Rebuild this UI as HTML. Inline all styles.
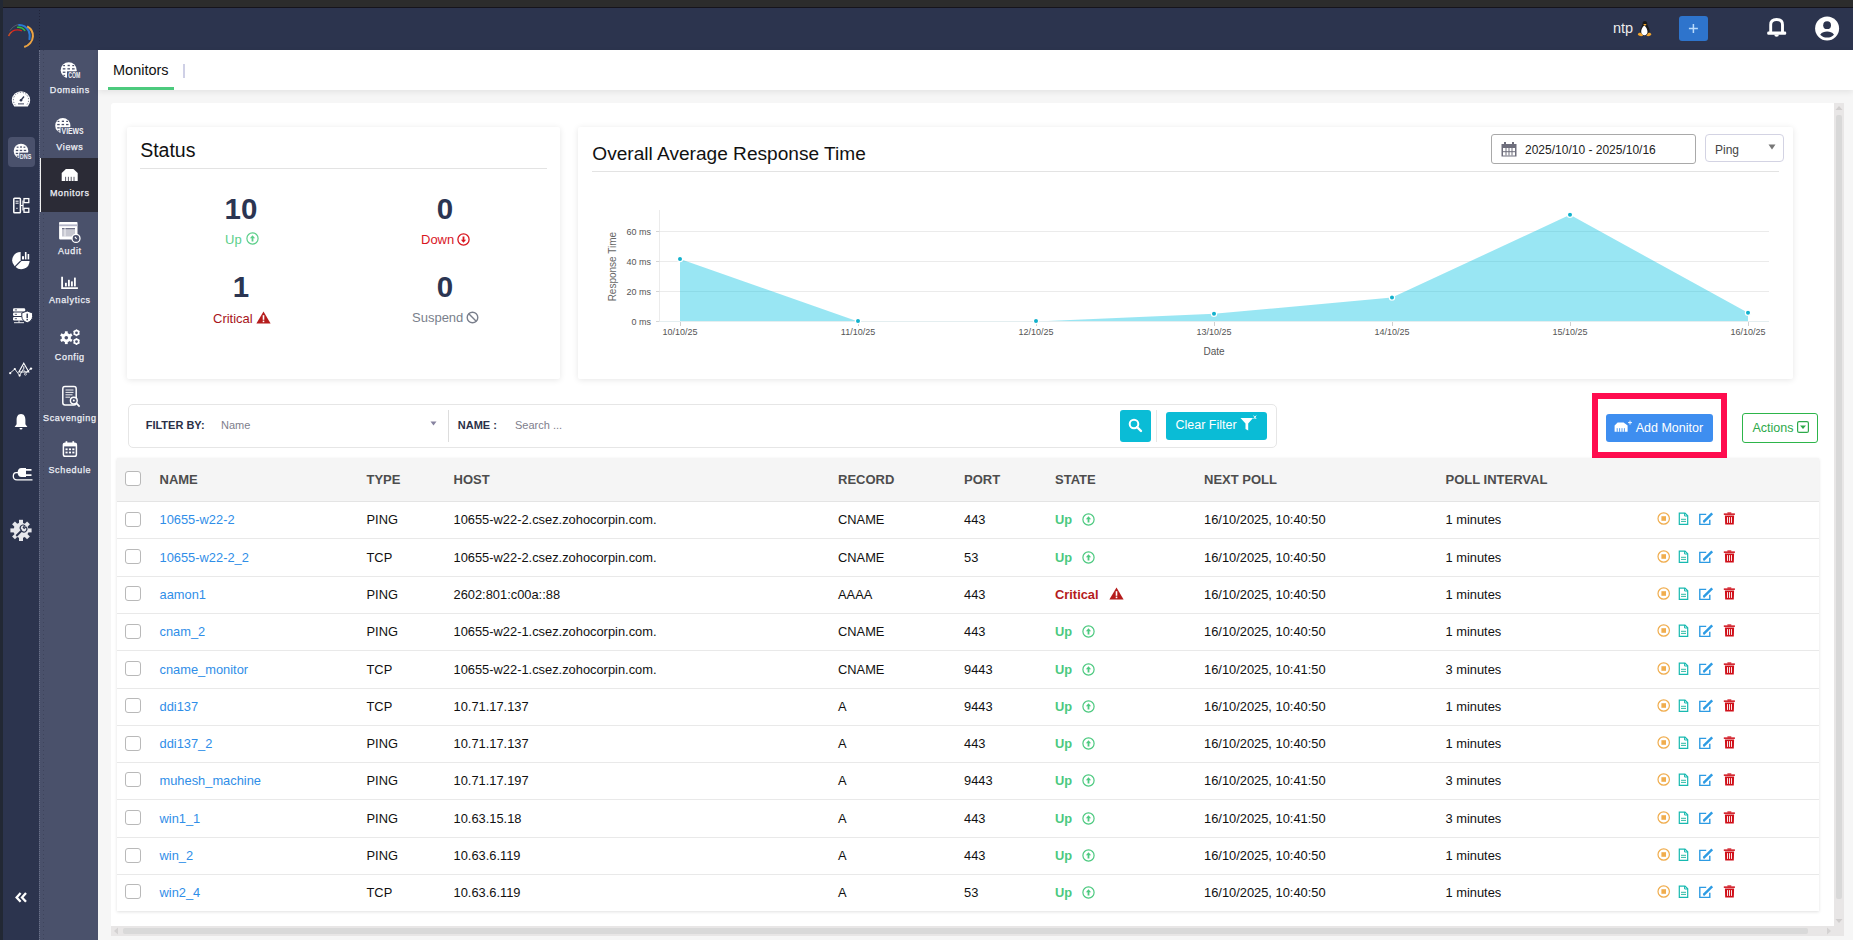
<!DOCTYPE html>
<html><head><meta charset="utf-8">
<style>
*{box-sizing:border-box;margin:0;padding:0}
html,body{width:1853px;height:940px;overflow:hidden;background:#f6f6f6;font-family:"Liberation Sans",sans-serif;color:#222}
.abs{position:absolute}
.t{position:absolute;line-height:1;white-space:nowrap}
.cb{position:absolute;width:16px;height:15px;border:1px solid #b9b9b9;border-radius:3px;background:#fff}
#topstrip{left:0;top:0;width:1853px;height:8px;background:#2c2c2c;border-bottom:1px solid #16141c}
#lstrip{left:0;top:0;width:3px;height:940px;background:#222834}
#col1{left:3px;top:8px;width:36px;height:932px;background:#2c344e}
#header{left:39px;top:8px;width:1814px;height:42px;background:#2c344e}
#col2{left:39px;top:50px;width:59px;height:890px;background:#4a516b;border-left:1px dotted #6a7189}
#col2dots{left:43px;top:50px;width:1px;height:890px;background:repeating-linear-gradient(to bottom,#3e445c 0,#3e445c 1px,transparent 1px,transparent 4px)}
#tabbar{left:98px;top:50px;width:1755px;height:40px;background:#fff;box-shadow:0 2px 6px rgba(0,0,0,.08)}
#panel{left:111px;top:103px;width:1723px;height:823px;background:#fff;border-radius:3px 0 0 0}
#vscroll{left:1834px;top:103px;width:10px;height:833px;background:#e8e6e6}
#hscroll{left:111px;top:926px;width:1723px;height:10px;background:#e8e6e6}
.card{position:absolute;background:#fff;border-radius:2px;box-shadow:0 1px 6px rgba(0,0,0,.10)}
.lbl{position:absolute;line-height:1;white-space:nowrap;font-size:9px;letter-spacing:0.65px;text-indent:0.65px;color:#eef0f6;text-align:center;width:59px;left:40px;-webkit-text-stroke:0.25px #eef0f6}
.ic{position:absolute}
</style></head><body>
<div id="topstrip" class="abs"></div>
<div id="lstrip" class="abs"></div>
<div id="col1" class="abs"></div>
<div id="header" class="abs"></div>
<div id="col2" class="abs"></div>
<div id="col2dots" class="abs"></div>
<div class="abs" style="left:39px;top:10px;width:1px;height:40px;background:repeating-linear-gradient(to bottom,#20243a 0,#20243a 1px,transparent 1px,transparent 3px)"></div>

<!-- logo -->
<svg class="ic" style="left:0;top:15px" width="40" height="40" viewBox="0 15 40 40">
 <path d="M10 30.5 C12 27.5 15 25.2 18.3 24.6" fill="none" stroke="#7d8294" stroke-width="0.8" opacity="0.6"/>
 <path d="M8.6 36 C10 33 12 31 15 30.2 C17.5 29.7 19.8 30 21.8 30.8" fill="none" stroke="#d9251e" stroke-width="1.3"/>
 <path d="M8.6 36 C9.5 34 10.5 32.6 11.6 31.8" fill="none" stroke="#b8552a" stroke-width="1.3"/>
 <path d="M17 27.4 C20 26.8 23 28 25.2 30.8" fill="none" stroke="#31c040" stroke-width="1.3"/>
 <path d="M18.3 25 C22.5 24.6 26.5 27.2 28.6 30.8 C29.8 33.2 29.9 37 29.4 40" fill="none" stroke="#2b79d2" stroke-width="2"/>
 <path d="M27.2 26.3 C31 28.5 33.2 32.5 32.9 36.5 C32.6 41.5 28.8 45.5 24.2 47" fill="none" stroke="#eda443" stroke-width="2.1"/>
</svg>
<!-- col1 icons -->
<svg class="ic" style="left:8px;top:86px" width="26" height="24" viewBox="8 86 26 24">
 <path d="M14.2 106.6 A9.2 9.2 0 1 1 27.8 106.6 Z" fill="#fff"/>
 <path d="M15.5 105.2 A7.6 7.6 0 1 1 26.5 105.2" fill="none" stroke="#2c344e" stroke-width="0.7" stroke-dasharray="1.2 1.5"/>
 <path d="M21.2 100 L24 96.5" stroke="#2c344e" stroke-width="1.3"/>
 <circle cx="21" cy="100.2" r="1.3" fill="#2c344e"/>
 <rect x="18" y="103.2" width="6" height="1.3" fill="#6a6f82"/>
</svg>
<div class="abs" style="left:8px;top:137px;width:27px;height:29.5px;background:#4a516c;border-radius:4px"></div>
<svg class="ic" style="left:10px;top:140px" width="24" height="22" viewBox="10 140 24 22">
 <circle cx="21" cy="151" r="7.3" fill="#fff"/>
 <g fill="#4a516c">
  <rect x="16.7" y="146.6" width="1.8" height="1.2"/><rect x="20.1" y="146.3" width="1.8" height="1.4"/><rect x="23.5" y="146.6" width="1.8" height="1.2"/>
  <rect x="15.8" y="149.8" width="2.4" height="1.3"/><rect x="19.8" y="149.8" width="2.4" height="1.3"/><rect x="23.8" y="149.8" width="2.4" height="1.3"/>
  <rect x="15.8" y="152.8" width="2.4" height="1.3"/>
  <rect x="16.8" y="155.6" width="1.8" height="1.2"/>
 </g>
 <rect x="19.3" y="152.6" width="13" height="7" fill="#4a516c"/>
 <text x="25.6" y="158.9" font-size="8" font-weight="bold" fill="#eef0f6" text-anchor="middle" font-family="Liberation Sans" textLength="11.5" lengthAdjust="spacingAndGlyphs">DNS</text>
</svg>
<svg class="ic" style="left:11px;top:195px" width="21" height="21" viewBox="11 195 21 21">
 <rect x="13.8" y="198.3" width="6.6" height="14.5" rx="0.8" fill="none" stroke="#fff" stroke-width="1.5"/>
 <path d="M15.6 201.2 H18.6 M15.6 203.2 H18.6 M16.3 208.3 H17.6" stroke="#fff" stroke-width="1"/>
 <path d="M20.4 205.5 H23 M23 200.6 V210.6" stroke="#fff" stroke-width="1.2"/>
 <rect x="24" y="198.6" width="4.8" height="4" fill="none" stroke="#fff" stroke-width="1.3"/>
 <rect x="24" y="208.3" width="4.8" height="4" fill="none" stroke="#fff" stroke-width="1.3"/>
</svg>
<svg class="ic" style="left:11px;top:250px" width="20" height="21" viewBox="11 250 20 21">
 <path d="M20.6 260.3 L20.6 252 A8.3 8.3 0 0 0 14.7 266.2 Z" fill="#fff"/>
 <path d="M21.5 261 L29.6 261 A8.3 8.3 0 0 1 15.6 266.9 Z" fill="#fff"/>
 <rect x="22" y="256.2" width="2" height="3.2" fill="#fff"/><rect x="24.9" y="252" width="1.6" height="7.4" fill="#fff"/><rect x="27.6" y="254" width="1.6" height="5.4" fill="#fff"/>
</svg>
<svg class="ic" style="left:11px;top:306px" width="23" height="19" viewBox="11 306 23 19">
 <rect x="13" y="308.2" width="12.2" height="3.4" rx="1.2" fill="#fff"/><rect x="13" y="312.6" width="12.2" height="3.4" rx="1.2" fill="#fff"/><rect x="13" y="317" width="12.2" height="3.4" rx="1.2" fill="#fff"/>
 <path d="M14.8 309.9 H17 M14.8 314.3 H17 M14.8 318.7 H17" stroke="#2c344e" stroke-width="0.8"/>
 <path d="M19 320.4 V322.5 M14 322.7 H24" stroke="#fff" stroke-width="0.9"/>
 <path d="M27.2 311 L32.6 313 V316.4 C32.6 319.5 30.3 321.6 27.2 322.8 C24.1 321.6 21.8 319.5 21.8 316.4 V313 Z" fill="#fff" stroke="#2c344e" stroke-width="1"/>
 <rect x="26.5" y="313.6" width="1.4" height="4.6" fill="#2c344e"/><rect x="26.5" y="319" width="1.4" height="1.4" fill="#2c344e"/>
</svg>
<svg class="ic" style="left:8px;top:360px" width="26" height="19" viewBox="8 360 26 19">
 <path d="M10 373.2 L14.8 369 L19.6 375.5 L23 369.5 L26 372.5 L31 368.6" fill="none" stroke="#fff" stroke-width="0.9"/>
 <path d="M23.8 363.2 L28.8 372 H18.8 Z" fill="none" stroke="#fff" stroke-width="1.1"/>
 <path d="M23.8 366.2 V369.3" stroke="#fff" stroke-width="1"/>
 <circle cx="10.2" cy="373.2" r="1.1" fill="#fff"/><circle cx="14.8" cy="369" r="1.1" fill="#fff"/><circle cx="19.6" cy="375.6" r="1.1" fill="#fff"/><circle cx="31" cy="368.6" r="1.2" fill="#fff"/><circle cx="25.4" cy="374.2" r="1" fill="none" stroke="#fff" stroke-width="0.7"/>
</svg>
<svg class="ic" style="left:12px;top:412px" width="18" height="20" viewBox="12 412 18 20">
 <path d="M21 414 C17.6 414 16.6 417 16.6 420 V424.2 L14.6 427 H27.4 L25.4 424.2 V420 C25.4 417 24.4 414 21 414 Z" fill="#fff"/>
 <path d="M19.5 428 A1.5 1.5 0 0 0 22.5 428 Z" fill="#fff"/>
</svg>
<svg class="ic" style="left:11px;top:465px" width="24" height="19" viewBox="11 465 24 19">
 <path d="M21.5 468 H26 V477 H21.5 C19 477 17.6 475.2 17.6 472.5 C17.6 469.8 19 468 21.5 468 Z" fill="#fff"/>
 <path d="M26 469.8 H31.5 M26 475.2 H31.5" stroke="#fff" stroke-width="1.7"/>
 <path d="M18 472.6 H16.2 C14 472.6 13.3 474.6 13.3 476.3 C13.3 478.4 14.8 479.8 17 479.8 H32.5" fill="none" stroke="#fff" stroke-width="1.3"/>
</svg>
<svg class="ic" style="left:9px;top:518px" width="24" height="25" viewBox="9 518 24 25">
 <g transform="translate(21 530.4)">
  <circle r="7.6" fill="#e6e7ec"/>
  <g fill="#e6e7ec"><rect x="-2" y="-10.6" width="4" height="4"/><rect x="-2" y="-10.6" width="4" height="4" transform="rotate(45)"/><rect x="-2" y="-10.6" width="4" height="4" transform="rotate(90)"/><rect x="-2" y="-10.6" width="4" height="4" transform="rotate(135)"/><rect x="-2" y="-10.6" width="4" height="4" transform="rotate(180)"/><rect x="-2" y="-10.6" width="4" height="4" transform="rotate(225)"/><rect x="-2" y="-10.6" width="4" height="4" transform="rotate(270)"/><rect x="-2" y="-10.6" width="4" height="4" transform="rotate(315)"/></g>
  <path d="M-4.6 4.8 L0.4 -0.2 A2.8 2.8 0 0 1 3.8 -4.8 L2.2 -3 L3.2 -2 L4.9 -3.6 A2.8 2.8 0 0 1 0.8 0.8 L-4 5.6 Z" fill="none" stroke="#2c344e" stroke-width="1.1"/>
 </g>
</svg>
<svg class="ic" style="left:13px;top:890px" width="16" height="14" viewBox="13 890 16 14">
 <path d="M20.6 893 L16.6 897.4 L20.6 901.8 M26 893 L22 897.4 L26 901.8" fill="none" stroke="#fff" stroke-width="2.3"/>
</svg>

<!-- col2 items -->
<svg class="ic" style="left:58px;top:60px" width="25" height="21" viewBox="58 60 25 21">
 <circle cx="68.7" cy="70.2" r="8" fill="#fff"/>
 <g fill="#4a506b">
  <rect x="63.2" y="65" width="1.8" height="1.2"/><rect x="67.6" y="64.8" width="2.2" height="1.4"/><rect x="72.3" y="65" width="1.8" height="1.2"/>
  <rect x="62.8" y="68.2" width="2.6" height="1.3"/><rect x="67.4" y="68.2" width="2.6" height="1.3"/><rect x="72" y="68.2" width="2.6" height="1.3"/>
  <rect x="62.8" y="71.6" width="2.6" height="1.3"/>
  <rect x="63.3" y="74.8" width="1.8" height="1.1"/>
 </g>
 <rect x="67" y="71.3" width="15" height="8" fill="#4a506b"/>
 <text x="74.2" y="78.3" font-size="8.6" font-weight="bold" fill="#f2f3f7" text-anchor="middle" font-family="Liberation Sans" textLength="12" lengthAdjust="spacingAndGlyphs">COM</text>
</svg>
<div class="lbl" style="top:85.6px">Domains</div>
<svg class="ic" style="left:52px;top:116px" width="35" height="21" viewBox="52 116 35 21">
 <circle cx="62.8" cy="125.7" r="7.6" fill="#fff"/>
 <g fill="#4a506b">
  <rect x="57.6" y="120.8" width="1.8" height="1.2"/><rect x="61.8" y="120.6" width="2.2" height="1.4"/><rect x="66.2" y="120.8" width="1.8" height="1.2"/>
  <rect x="57.2" y="123.9" width="2.5" height="1.3"/><rect x="61.6" y="123.9" width="2.5" height="1.3"/><rect x="66" y="123.9" width="2.5" height="1.3"/>
  <rect x="57.2" y="127.2" width="2.5" height="1.3"/>
  <rect x="57.7" y="130.3" width="1.8" height="1.1"/>
 </g>
 <rect x="60.5" y="127.2" width="26" height="8" fill="#4a506b"/>
 <text x="72.6" y="134.2" font-size="8.6" font-weight="bold" fill="#f2f3f7" text-anchor="middle" font-family="Liberation Sans" textLength="22" lengthAdjust="spacingAndGlyphs">VIEWS</text>
</svg>
<div class="lbl" style="top:142.7px">Views</div>
<div class="abs" style="left:40px;top:158px;width:58px;height:54px;background:#2b2b36;border-left:1px solid #f0f0f0"></div>
<svg class="ic" style="left:60px;top:167px" width="20" height="16" viewBox="60 167 20 16">
 <path d="M65.9 168.9 H73.4 L77.7 172.9 V181 H61.7 V172.9 Z" fill="#fff"/>
 <path d="M65.6 176.8 V181 M68.4 176.8 V181 M71.2 176.8 V181 M74 176.8 V181" stroke="#5a5a66" stroke-width="1"/>
</svg>
<div class="lbl" style="top:188.7px">Monitors</div>
<svg class="ic" style="left:57px;top:220px" width="25" height="25" viewBox="57 220 25 25">
 <rect x="59.1" y="222" width="18.4" height="17.4" rx="0.8" fill="#fff"/>
 <rect x="59.1" y="224.4" width="18.4" height="1.8" fill="#b3b5c8"/>
 <rect x="62" y="228" width="13" height="8.5" fill="#c6c7d0"/>
 <path d="M62 228.6 H75" stroke="#6e7086" stroke-width="1.2"/>
 <path d="M65 228 V236.5" stroke="#fff" stroke-width="0.8"/>
 <circle cx="76" cy="238.4" r="4" fill="#4a506b" stroke="#fff" stroke-width="1.3"/>
 <path d="M75 236.8 L76.6 239" stroke="#fff" stroke-width="1.2"/>
</svg>
<div class="lbl" style="top:246.7px">Audit</div>
<svg class="ic" style="left:60px;top:275px" width="20" height="16" viewBox="60 275 20 16">
 <path d="M62.1 276.7 V288.2 H77.9" fill="none" stroke="#fff" stroke-width="1.8"/>
 <rect x="65" y="282.8" width="1.8" height="3.6" fill="#fff"/><rect x="68" y="279.8" width="1.8" height="6.6" fill="#fff"/><rect x="71" y="281.4" width="1.8" height="5" fill="#fff"/><rect x="74" y="277.6" width="1.8" height="8.8" fill="#fff"/>
</svg>
<div class="lbl" style="top:295.7px">Analytics</div>
<svg class="ic" style="left:58px;top:328px" width="24" height="19" viewBox="58 328 24 19">
 <g transform="translate(66.3 337.7)">
  <circle r="4.6" fill="#fff"/>
  <g fill="#fff"><rect x="-1.4" y="-6.4" width="2.8" height="2.6"/><rect x="-1.4" y="-6.4" width="2.8" height="2.6" transform="rotate(60)"/><rect x="-1.4" y="-6.4" width="2.8" height="2.6" transform="rotate(120)"/><rect x="-1.4" y="-6.4" width="2.8" height="2.6" transform="rotate(180)"/><rect x="-1.4" y="-6.4" width="2.8" height="2.6" transform="rotate(240)"/><rect x="-1.4" y="-6.4" width="2.8" height="2.6" transform="rotate(300)"/></g>
  <circle r="1.8" fill="#4a506b"/>
 </g>
 <g transform="translate(76.5 332.8)"><circle r="2.2" fill="none" stroke="#fff" stroke-width="1.6"/><g fill="#fff"><rect x="-0.7" y="-3.4" width="1.4" height="1.3"/><rect x="-0.7" y="-3.4" width="1.4" height="1.3" transform="rotate(60)"/><rect x="-0.7" y="-3.4" width="1.4" height="1.3" transform="rotate(120)"/><rect x="-0.7" y="-3.4" width="1.4" height="1.3" transform="rotate(180)"/><rect x="-0.7" y="-3.4" width="1.4" height="1.3" transform="rotate(240)"/><rect x="-0.7" y="-3.4" width="1.4" height="1.3" transform="rotate(300)"/></g></g>
 <g transform="translate(76.5 341.6)"><circle r="2.2" fill="none" stroke="#fff" stroke-width="1.6"/><g fill="#fff"><rect x="-0.7" y="-3.4" width="1.4" height="1.3"/><rect x="-0.7" y="-3.4" width="1.4" height="1.3" transform="rotate(60)"/><rect x="-0.7" y="-3.4" width="1.4" height="1.3" transform="rotate(120)"/><rect x="-0.7" y="-3.4" width="1.4" height="1.3" transform="rotate(180)"/><rect x="-0.7" y="-3.4" width="1.4" height="1.3" transform="rotate(240)"/><rect x="-0.7" y="-3.4" width="1.4" height="1.3" transform="rotate(300)"/></g></g>
</svg>
<div class="lbl" style="top:352.7px">Config</div>
<svg class="ic" style="left:60px;top:384px" width="23" height="25" viewBox="60 384 23 25">
 <rect x="62.8" y="386.5" width="13.4" height="18.5" rx="2.2" fill="none" stroke="#fff" stroke-width="1.5"/>
 <path d="M65.5 390 H73.5 M65.5 392.4 H73.5 M65.5 394.8 H72.5 M65.5 397.2 H70" stroke="#fff" stroke-width="0.9"/>
 <circle cx="73.8" cy="400.6" r="3.4" fill="#4a506b" stroke="#fff" stroke-width="1.4"/>
 <circle cx="73.8" cy="400.6" r="1" fill="#fff"/>
 <path d="M76.3 403.1 L79.6 406.6" stroke="#fff" stroke-width="1.7"/>
</svg>
<div class="lbl" style="top:413.7px">Scavenging</div>
<svg class="ic" style="left:61px;top:440px" width="18" height="19" viewBox="61 440 18 19">
 <rect x="63.4" y="443.2" width="13" height="13" rx="1.8" fill="none" stroke="#fff" stroke-width="1.5"/>
 <rect x="63.4" y="443.2" width="13" height="3.2" fill="#fff"/>
 <rect x="65.6" y="441.2" width="1.7" height="3.4" fill="#fff"/><rect x="72.4" y="441.2" width="1.7" height="3.4" fill="#fff"/>
 <g fill="#fff"><rect x="65.5" y="448.4" width="2.1" height="1.8"/><rect x="68.9" y="448.4" width="2.1" height="1.8"/><rect x="72.3" y="448.4" width="2.1" height="1.8"/><rect x="65.5" y="451.6" width="2.1" height="1.8"/><rect x="68.9" y="451.6" width="2.1" height="1.8"/><rect x="72.3" y="451.6" width="2.1" height="1.8"/></g>
</svg>
<div class="lbl" style="top:465.7px">Schedule</div>

<!-- header right -->
<div class="t" style="left:1613px;top:20.9px;font-size:14.5px;color:#ececec">ntp</div>
<svg class="ic" style="left:1636px;top:19px" width="18" height="19" viewBox="1636 19 18 19">
 <path d="M1644.8 21 C1643.2 21 1642.6 22.2 1642.6 23.6 C1642.6 25.6 1640.6 27.6 1640.2 30.5 C1639.8 33.5 1641.8 35.3 1644.8 35.3 C1647.8 35.3 1649.8 33.8 1649.6 30.8 C1649.4 27.8 1647.2 25.8 1647.2 23.6 C1647.2 22.2 1646.6 21 1644.8 21 Z" fill="#1a1a1a"/>
 <path d="M1644.2 25.4 C1642.4 27 1641 29.5 1641.2 32 C1641.4 34.4 1642.8 35.2 1644.4 35.2 C1646.2 35.2 1647.6 34.2 1647.5 31.8 C1647.4 29.2 1646.2 27 1644.2 25.4 Z" fill="#fff"/>
 <path d="M1643.2 23.9 H1646.6 L1645 25.9 Z" fill="#f2a52d"/>
 <path d="M1637.8 34.8 C1638 33 1639.8 32.4 1641.2 33.2 L1643.2 35.6 C1641.6 36.6 1639.2 36.3 1637.8 34.8 Z" fill="#f2a52d"/>
 <path d="M1651.4 34.6 C1651 32.8 1649.2 32.4 1648 33.2 L1646.4 35.8 C1648 36.6 1650.2 36.2 1651.4 34.6 Z" fill="#f2a52d"/>
</svg>
<div class="abs" style="left:1679px;top:16px;width:29px;height:25px;background:#2e74cc;border-radius:3px"></div>
<svg class="ic" style="left:1685px;top:20px" width="17" height="17" viewBox="1685 20 17 17">
 <path d="M1693.4 24 V33 M1688.9 28.5 H1697.9" stroke="#b8dafc" stroke-width="1.5"/>
</svg>
<svg class="ic" style="left:1764px;top:15px" width="25" height="25" viewBox="1764 15 25 25">
 <path d="M1770.7 32.8 V24.7 C1770.7 21.3 1773.2 19.5 1776.6 19.5 C1780 19.5 1782.5 21.3 1782.5 24.7 V32.8" fill="none" stroke="#fff" stroke-width="2.9"/>
 <rect x="1767.2" y="31.5" width="19" height="3.2" rx="1.2" fill="#fff"/>
 <path d="M1774.3 34.4 A2.3 2.3 0 0 0 1778.9 34.4 Z" fill="#fff"/>
</svg>
<svg class="ic" style="left:1813px;top:14px" width="29" height="29" viewBox="1813 14 29 29">
 <circle cx="1827.1" cy="28.5" r="12" fill="#fff"/>
 <circle cx="1827.1" cy="25.2" r="3.9" fill="#2c344e"/>
 <path d="M1820.2 34.8 C1822 32.2 1824.2 31.6 1827.1 31.6 C1830 31.6 1832.2 32.2 1834 34.8 C1832 37 1829.8 37.6 1827.1 37.6 C1824.4 37.6 1822.2 37 1820.2 34.8 Z" fill="#2c344e"/>
</svg>
<div id="tabbar" class="abs"></div>
<div class="t" style="left:113px;top:62.6px;font-size:14.5px;color:#111">Monitors</div>
<div class="abs" style="left:108px;top:87px;width:66px;height:3px;background:#4cca7d"></div>
<div class="abs" style="left:183px;top:64px;width:1.5px;height:14px;background:#cfd0e6"></div>
<div id="panel" class="abs"></div>

<!-- status card -->
<div class="card" style="left:127px;top:127px;width:433px;height:252px"></div>
<div class="t" style="left:140.2px;top:141.4px;font-size:19.5px;color:#111">Status</div>
<div class="abs" style="left:140px;top:168px;width:407px;height:1px;background:#e3e3e3"></div>
<div class="t" style="left:141px;width:200px;text-align:center;top:193.8px;font-size:29.5px;font-weight:bold;color:#2b3552">10</div>
<div class="t" style="left:345px;width:200px;text-align:center;top:193.8px;font-size:29.5px;font-weight:bold;color:#2b3552">0</div>
<div class="t" style="left:141px;width:200px;text-align:center;top:271.8px;font-size:29.5px;font-weight:bold;color:#2b3552">1</div>
<div class="t" style="left:345px;width:200px;text-align:center;top:271.8px;font-size:29.5px;font-weight:bold;color:#2b3552">0</div>
<div class="t" style="left:225px;top:232.7px;font-size:13px;color:#5ccf8a">Up</div>
<svg class="ic" style="left:245.5px;top:231.8px" width="13" height="13" viewBox="0 0 13 13"><circle cx="6.5" cy="6.5" r="5.6" fill="none" stroke="#5ccf8a" stroke-width="1.2"/><path d="M6.5 3.3 L3.9 6.2 H5.6 V9.6 H7.4 V6.2 H9.1 Z" fill="#5ccf8a"/></svg>
<div class="t" style="left:421px;top:232.7px;font-size:13px;color:#d9161f">Down</div>
<svg class="ic" style="left:456.8px;top:232.5px" width="13" height="13" viewBox="0 0 13 13"><circle cx="6.5" cy="6.5" r="5.6" fill="none" stroke="#d9161f" stroke-width="1.3"/><path d="M6.5 9.7 L3.9 6.8 H5.6 V3.4 H7.4 V6.8 H9.1 Z" fill="#d9161f"/></svg>
<div class="t" style="left:213px;top:311.5px;font-size:13px;color:#a8141b">Critical</div>
<svg class="ic" style="left:256px;top:310.8px" width="15" height="13" viewBox="0 0 15 13"><path d="M7.5 0.6 L14.6 12.6 H0.4 Z" fill="#b51c1c"/><rect x="6.7" y="4.2" width="1.6" height="4.6" fill="#fff"/><rect x="6.7" y="9.6" width="1.6" height="1.6" fill="#fff"/></svg>
<div class="t" style="left:412px;top:310.7px;font-size:13px;color:#7a7f8c">Suspend</div>
<svg class="ic" style="left:466px;top:311px" width="13" height="13" viewBox="0 0 13 13"><circle cx="6.5" cy="6.5" r="5.3" fill="none" stroke="#7a7f8c" stroke-width="1.4"/><path d="M2.8 2.8 L10.2 10.2" stroke="#7a7f8c" stroke-width="1.4"/></svg>

<!-- chart card -->
<div class="card" style="left:578px;top:127px;width:1215px;height:252px"></div>
<div class="t" style="left:592.3px;top:143.6px;font-size:19.1px;color:#111">Overall Average Response Time</div>
<div class="abs" style="left:592px;top:171px;width:1187px;height:1px;background:#e3e3e3"></div>
<div class="abs" style="left:1491px;top:134px;width:205px;height:30px;border:1px solid #a9a9a9;border-radius:3px;background:#fff"></div>
<svg class="ic" style="left:1501px;top:142px" width="16" height="15" viewBox="0 0 16 15">
 <rect x="0.5" y="2" width="15" height="12.5" fill="#6e6e7c"/>
 <rect x="2" y="6" width="12" height="7.5" fill="#fff"/>
 <path d="M5 6 V13.5 M8 6 V13.5 M11 6 V13.5 M2 9.7 H14" stroke="#6e6e7c" stroke-width="1"/>
 <rect x="3" y="0" width="2" height="3.5" fill="#6e6e7c"/><rect x="11" y="0" width="2" height="3.5" fill="#6e6e7c"/>
</svg>
<div class="t" style="left:1525px;top:143.7px;font-size:12px;color:#222">2025/10/10 - 2025/10/16</div>
<div class="abs" style="left:1705px;top:134px;width:79px;height:28px;border:1px solid #d3d3e3;border-radius:4px;background:#fff"></div>
<div class="t" style="left:1715px;top:143.7px;font-size:12px;color:#444">Ping</div>
<svg class="ic" style="left:1768px;top:144px" width="8" height="6" viewBox="0 0 8 6"><path d="M0.5 0.5 H7.5 L4 5.5 Z" fill="#777"/></svg>

<svg class="ic" style="left:578px;top:190px" width="1215" height="180" viewBox="578 190 1215 180">
 <g stroke="#ebebeb" stroke-width="1">
  <path d="M659.5 231.5 H1769 M659.5 261.5 H1769 M659.5 291.5 H1769"/>
 </g>
 <path d="M659.5 210 V321.5" stroke="#ebebeb" stroke-width="1"/>
 <path d="M656 231.5 H659.5 M656 261.5 H659.5 M656 291.5 H659.5 M656 321.5 H659.5" stroke="#d6d6d6" stroke-width="1"/>
 <polygon points="680,259 858,321.5 1036,321.5 1214,313.7 1392,297.6 1570,214.8 1748,312.8 1748,321.5 680,321.5" fill="#00c0e0" fill-opacity="0.4"/>
 <path d="M659.5 321.5 H1769" stroke="#e4eef0" stroke-width="1"/>
 <g stroke="#d0d0d0" stroke-width="1">
  <path d="M680.5 322 V326 M858.5 322 V326 M1036.5 322 V326 M1214.5 322 V326 M1392.5 322 V326 M1570.5 322 V326 M1748.5 322 V326"/>
 </g>
 <g fill="#12b1cc" stroke="#fff" stroke-width="1.2">
  <circle cx="680" cy="259" r="2.6"/><circle cx="858" cy="321" r="2.6"/><circle cx="1036" cy="321" r="2.6"/><circle cx="1214" cy="313.7" r="2.6"/><circle cx="1392" cy="297.6" r="2.6"/><circle cx="1570" cy="214.8" r="2.6"/><circle cx="1748" cy="312.8" r="2.6"/>
 </g>
 <g font-family="Liberation Sans" font-size="9" fill="#555" text-anchor="end">
  <text x="651" y="234.5">60 ms</text><text x="651" y="264.5">40 ms</text><text x="651" y="294.5">20 ms</text><text x="651" y="324.5">0 ms</text>
 </g>
 <g font-family="Liberation Sans" font-size="9" fill="#555" text-anchor="middle">
  <text x="680" y="335">10/10/25</text><text x="858" y="335">11/10/25</text><text x="1036" y="335">12/10/25</text><text x="1214" y="335">13/10/25</text><text x="1392" y="335">14/10/25</text><text x="1570" y="335">15/10/25</text><text x="1748" y="335">16/10/25</text>
 </g>
 <text x="1214" y="355" font-family="Liberation Sans" font-size="10" fill="#555" text-anchor="middle">Date</text>
 <text x="615.8" y="266.6" font-family="Liberation Sans" font-size="10" fill="#666" text-anchor="middle" transform="rotate(-90 615.8 266.6)">Response Time</text>
</svg>

<!-- filter bar -->
<div class="abs" style="left:127.5px;top:404px;width:1149px;height:44px;border:1px solid #e6e6e6;border-radius:5px;background:#fff"></div>
<div class="t" style="left:145.7px;top:419.5px;font-size:11px;font-weight:bold;color:#2a3048">FILTER BY:</div>
<div class="t" style="left:221px;top:419.5px;font-size:11px;color:#7e7e8c">Name</div>
<svg class="ic" style="left:429.5px;top:421px" width="7" height="5" viewBox="0 0 7 5"><path d="M0.5 0.5 H6.5 L3.5 4.5 Z" fill="#8783a0"/></svg>
<div class="abs" style="left:448px;top:410px;width:1px;height:32px;background:#ddd"></div>
<div class="t" style="left:457.8px;top:419.5px;font-size:11px;font-weight:bold;color:#2a3048">NAME :</div>
<div class="t" style="left:515px;top:419.5px;font-size:11px;color:#7e7e8c">Search ...</div>
<div class="abs" style="left:1120px;top:410px;width:31px;height:32px;background:#0abcd6;border-radius:3px"></div>
<svg class="ic" style="left:1128px;top:418px" width="15" height="15" viewBox="0 0 15 15"><circle cx="6" cy="6" r="4.3" fill="none" stroke="#fff" stroke-width="2"/><path d="M9 9 L13 13" stroke="#fff" stroke-width="2.4" stroke-linecap="round"/></svg>
<div class="abs" style="left:1156px;top:410px;width:1px;height:32px;background:#e6e6e6"></div>
<div class="abs" style="left:1166px;top:412px;width:101px;height:28px;background:#0abcd6;border-radius:3px"></div>
<div class="t" style="left:1175.5px;top:419px;font-size:12.5px;color:#fff">Clear Filter</div>
<svg class="ic" style="left:1240px;top:414px" width="20" height="18" viewBox="0 0 20 18"><path d="M0.5 4 H13 L8.2 9.5 V16.5 L5.5 15 V9.5 Z" fill="#fff"/><path d="M13.6 1.6 L16.2 5 M16.2 1.6 L13.6 5" stroke="#fff" stroke-width="0.9"/></svg>

<!-- add monitor + actions -->
<div class="abs" style="left:1592px;top:393px;width:135px;height:65px;border:6px solid #ff0d4f"></div>
<div class="abs" style="left:1606px;top:414px;width:107px;height:28px;background:#3e8ef0;border-radius:3px"></div>
<svg class="ic" style="left:1612px;top:419px" width="22" height="16" viewBox="1612 419 22 16"><path d="M1617.6 422.4 H1623.6 L1627.6 425.4 V431.8 H1614.6 V425.4 Z" fill="#fff"/><path d="M1617.2 428.2 V431.8 M1619.6 428.2 V431.8 M1622 428.2 V431.8 M1624.4 428.2 V431.8" stroke="#3e8ef0" stroke-width="0.9"/><path d="M1630 420.6 V424.6 M1628 422.6 H1632" stroke="#fff" stroke-width="0.9"/></svg>
<div class="t" style="left:1635.7px;top:422px;font-size:12.5px;color:#fff">Add Monitor</div>
<div class="abs" style="left:1742px;top:413px;width:76px;height:30px;border:1px solid #2db54a;border-radius:3px;background:#fff"></div>
<div class="t" style="left:1752.5px;top:422px;font-size:12.5px;color:#2da94a">Actions</div>
<svg class="ic" style="left:1797px;top:421px" width="12" height="12" viewBox="0 0 12 12"><rect x="0.6" y="0.6" width="10.8" height="10.8" rx="1.5" fill="none" stroke="#2da94a" stroke-width="1.2"/><path d="M3 4.5 H9 L6 8 Z" fill="#2da94a"/></svg>

<!-- table -->
<div class="abs" style="left:117px;top:458px;width:1702px;height:453px;background:#fff;box-shadow:0 1px 3px rgba(0,0,0,.12)"></div>
<div class="abs" style="left:117px;top:458px;width:1702px;height:44px;background:#f5f5f5;border-bottom:1px solid #e4e4e4"></div>
<div class="t" style="left:159.5px;top:473.30px;font-size:13px;color:#4d4d4d;font-weight:bold;">NAME</div>
<div class="t" style="left:366.5px;top:473.30px;font-size:13px;color:#4d4d4d;font-weight:bold;">TYPE</div>
<div class="t" style="left:453.5px;top:473.30px;font-size:13px;color:#4d4d4d;font-weight:bold;">HOST</div>
<div class="t" style="left:838px;top:473.30px;font-size:13px;color:#4d4d4d;font-weight:bold;">RECORD</div>
<div class="t" style="left:964px;top:473.30px;font-size:13px;color:#4d4d4d;font-weight:bold;">PORT</div>
<div class="t" style="left:1055px;top:473.30px;font-size:13px;color:#4d4d4d;font-weight:bold;">STATE</div>
<div class="t" style="left:1204px;top:473.30px;font-size:13px;color:#4d4d4d;font-weight:bold;">NEXT POLL</div>
<div class="t" style="left:1445.5px;top:473.30px;font-size:13px;color:#4d4d4d;font-weight:bold;">POLL INTERVAL</div>
<div class="cb" style="left:125px;top:471px"></div>
<div class="cb" style="left:125px;top:512px"></div>
<div class="t" style="left:159.5px;top:514.21px;font-size:12.86px;color:#2f8ee8;">10655-w22-2</div>
<div class="t" style="left:366.5px;top:514.21px;font-size:12.86px;color:#111;">PING</div>
<div class="t" style="left:453.5px;top:514.21px;font-size:12.86px;color:#111;">10655-w22-2.csez.zohocorpin.com.</div>
<div class="t" style="left:838px;top:514.21px;font-size:12.86px;color:#111;">CNAME</div>
<div class="t" style="left:964px;top:514.21px;font-size:12.86px;color:#111;">443</div>
<div class="t" style="left:1055px;top:514.21px;font-size:12.86px;color:#4cc97f;font-weight:bold;">Up</div>
<div class="abs" style="left:1081.7px;top:512.10px;width:13px;height:13px"><svg width="13" height="13" viewBox="0 0 13 13"><circle cx="6.5" cy="6.5" r="5.6" fill="none" stroke="#4cc97f" stroke-width="1.2"/><path d="M6.5 3.3 L3.9 6.2 H5.6 V9.6 H7.4 V6.2 H9.1 Z" fill="#4cc97f"/></svg></div>
<div class="t" style="left:1204px;top:514.21px;font-size:12.86px;color:#111;">16/10/2025, 10:40:50</div>
<div class="t" style="left:1445.5px;top:514.21px;font-size:12.86px;color:#111;">1 minutes</div>
<svg class="ic" style="left:1650px;top:509.00px" width="95" height="20" viewBox="1650 -10 95 20"><circle cx="1663.7" cy="-0.5" r="5.7" fill="none" stroke="#f0ad4e" stroke-width="1.2"/><rect x="1661.4" y="-2.8" width="4.6" height="4.6" fill="#f0ad4e"/><path d="M1679.3 -5.9 H1685 L1687.7 -3.2 V5.4 H1679.3 Z" fill="none" stroke="#17b9b0" stroke-width="1.2"/><path d="M1684.6 -6 V-3 H1687.8" fill="none" stroke="#17b9b0" stroke-width="1"/><path d="M1681 0.3 H1686 M1681 2.4 H1686" stroke="#17b39a" stroke-width="0.9"/><path d="M1706.2 -4.6 H1699.8 V5.4 H1709.8 V0.8" fill="none" stroke="#2d9be3" stroke-width="1.4"/><path d="M1703.6 2.9 L1712.2 -5.7" stroke="#2d9be3" stroke-width="2.4"/><path d="M1703 3.6 L1703.4 1.6 L1705 3.2 Z" fill="#2d9be3"/><rect x="1723.8" y="-5.6" width="11.1" height="1.5" fill="#d0101a"/><rect x="1727.4" y="-6.6" width="3.9" height="1.2" fill="#d0101a"/><path d="M1724.9 -3.4 H1734.1 L1733.8 5.6 H1725.2 Z" fill="#d0101a"/><rect x="1727" y="-1.9" width="0.9" height="5.8" fill="#fff"/><rect x="1729.05" y="-1.9" width="0.9" height="5.8" fill="#fff"/><rect x="1731.1" y="-1.9" width="0.9" height="5.8" fill="#fff"/></svg>
<div class="abs" style="left:117px;top:538px;width:1702px;height:1px;background:#e9e9e9"></div>
<div class="cb" style="left:125px;top:549px"></div>
<div class="t" style="left:159.5px;top:551.71px;font-size:12.86px;color:#2f8ee8;">10655-w22-2_2</div>
<div class="t" style="left:366.5px;top:551.71px;font-size:12.86px;color:#111;">TCP</div>
<div class="t" style="left:453.5px;top:551.71px;font-size:12.86px;color:#111;">10655-w22-2.csez.zohocorpin.com.</div>
<div class="t" style="left:838px;top:551.71px;font-size:12.86px;color:#111;">CNAME</div>
<div class="t" style="left:964px;top:551.71px;font-size:12.86px;color:#111;">53</div>
<div class="t" style="left:1055px;top:551.71px;font-size:12.86px;color:#4cc97f;font-weight:bold;">Up</div>
<div class="abs" style="left:1081.7px;top:549.60px;width:13px;height:13px"><svg width="13" height="13" viewBox="0 0 13 13"><circle cx="6.5" cy="6.5" r="5.6" fill="none" stroke="#4cc97f" stroke-width="1.2"/><path d="M6.5 3.3 L3.9 6.2 H5.6 V9.6 H7.4 V6.2 H9.1 Z" fill="#4cc97f"/></svg></div>
<div class="t" style="left:1204px;top:551.71px;font-size:12.86px;color:#111;">16/10/2025, 10:40:50</div>
<div class="t" style="left:1445.5px;top:551.71px;font-size:12.86px;color:#111;">1 minutes</div>
<svg class="ic" style="left:1650px;top:546.50px" width="95" height="20" viewBox="1650 -10 95 20"><circle cx="1663.7" cy="-0.5" r="5.7" fill="none" stroke="#f0ad4e" stroke-width="1.2"/><rect x="1661.4" y="-2.8" width="4.6" height="4.6" fill="#f0ad4e"/><path d="M1679.3 -5.9 H1685 L1687.7 -3.2 V5.4 H1679.3 Z" fill="none" stroke="#17b9b0" stroke-width="1.2"/><path d="M1684.6 -6 V-3 H1687.8" fill="none" stroke="#17b9b0" stroke-width="1"/><path d="M1681 0.3 H1686 M1681 2.4 H1686" stroke="#17b39a" stroke-width="0.9"/><path d="M1706.2 -4.6 H1699.8 V5.4 H1709.8 V0.8" fill="none" stroke="#2d9be3" stroke-width="1.4"/><path d="M1703.6 2.9 L1712.2 -5.7" stroke="#2d9be3" stroke-width="2.4"/><path d="M1703 3.6 L1703.4 1.6 L1705 3.2 Z" fill="#2d9be3"/><rect x="1723.8" y="-5.6" width="11.1" height="1.5" fill="#d0101a"/><rect x="1727.4" y="-6.6" width="3.9" height="1.2" fill="#d0101a"/><path d="M1724.9 -3.4 H1734.1 L1733.8 5.6 H1725.2 Z" fill="#d0101a"/><rect x="1727" y="-1.9" width="0.9" height="5.8" fill="#fff"/><rect x="1729.05" y="-1.9" width="0.9" height="5.8" fill="#fff"/><rect x="1731.1" y="-1.9" width="0.9" height="5.8" fill="#fff"/></svg>
<div class="abs" style="left:117px;top:576px;width:1702px;height:1px;background:#e9e9e9"></div>
<div class="cb" style="left:125px;top:586px"></div>
<div class="t" style="left:159.5px;top:589.21px;font-size:12.86px;color:#2f8ee8;">aamon1</div>
<div class="t" style="left:366.5px;top:589.21px;font-size:12.86px;color:#111;">PING</div>
<div class="t" style="left:453.5px;top:589.21px;font-size:12.86px;color:#111;">2602:801:c00a::88</div>
<div class="t" style="left:838px;top:589.21px;font-size:12.86px;color:#111;">AAAA</div>
<div class="t" style="left:964px;top:589.21px;font-size:12.86px;color:#111;">443</div>
<div class="t" style="left:1055px;top:589.21px;font-size:12.86px;color:#b51c1c;font-weight:bold;">Critical</div>
<div class="abs" style="left:1109px;top:586.20px;width:15px;height:13px"><svg width="15" height="13" viewBox="0 0 15 13"><path d="M7.5 0.6 L14.6 12.6 H0.4 Z" fill="#b51c1c"/><rect x="6.7" y="4.2" width="1.6" height="4.6" fill="#fff"/><rect x="6.7" y="9.6" width="1.6" height="1.6" fill="#fff"/></svg></div>
<div class="t" style="left:1204px;top:589.21px;font-size:12.86px;color:#111;">16/10/2025, 10:40:50</div>
<div class="t" style="left:1445.5px;top:589.21px;font-size:12.86px;color:#111;">1 minutes</div>
<svg class="ic" style="left:1650px;top:584.00px" width="95" height="20" viewBox="1650 -10 95 20"><circle cx="1663.7" cy="-0.5" r="5.7" fill="none" stroke="#f0ad4e" stroke-width="1.2"/><rect x="1661.4" y="-2.8" width="4.6" height="4.6" fill="#f0ad4e"/><path d="M1679.3 -5.9 H1685 L1687.7 -3.2 V5.4 H1679.3 Z" fill="none" stroke="#17b9b0" stroke-width="1.2"/><path d="M1684.6 -6 V-3 H1687.8" fill="none" stroke="#17b9b0" stroke-width="1"/><path d="M1681 0.3 H1686 M1681 2.4 H1686" stroke="#17b39a" stroke-width="0.9"/><path d="M1706.2 -4.6 H1699.8 V5.4 H1709.8 V0.8" fill="none" stroke="#2d9be3" stroke-width="1.4"/><path d="M1703.6 2.9 L1712.2 -5.7" stroke="#2d9be3" stroke-width="2.4"/><path d="M1703 3.6 L1703.4 1.6 L1705 3.2 Z" fill="#2d9be3"/><rect x="1723.8" y="-5.6" width="11.1" height="1.5" fill="#d0101a"/><rect x="1727.4" y="-6.6" width="3.9" height="1.2" fill="#d0101a"/><path d="M1724.9 -3.4 H1734.1 L1733.8 5.6 H1725.2 Z" fill="#d0101a"/><rect x="1727" y="-1.9" width="0.9" height="5.8" fill="#fff"/><rect x="1729.05" y="-1.9" width="0.9" height="5.8" fill="#fff"/><rect x="1731.1" y="-1.9" width="0.9" height="5.8" fill="#fff"/></svg>
<div class="abs" style="left:117px;top:613px;width:1702px;height:1px;background:#e9e9e9"></div>
<div class="cb" style="left:125px;top:624px"></div>
<div class="t" style="left:159.5px;top:626.21px;font-size:12.86px;color:#2f8ee8;">cnam_2</div>
<div class="t" style="left:366.5px;top:626.21px;font-size:12.86px;color:#111;">PING</div>
<div class="t" style="left:453.5px;top:626.21px;font-size:12.86px;color:#111;">10655-w22-1.csez.zohocorpin.com.</div>
<div class="t" style="left:838px;top:626.21px;font-size:12.86px;color:#111;">CNAME</div>
<div class="t" style="left:964px;top:626.21px;font-size:12.86px;color:#111;">443</div>
<div class="t" style="left:1055px;top:626.21px;font-size:12.86px;color:#4cc97f;font-weight:bold;">Up</div>
<div class="abs" style="left:1081.7px;top:624.10px;width:13px;height:13px"><svg width="13" height="13" viewBox="0 0 13 13"><circle cx="6.5" cy="6.5" r="5.6" fill="none" stroke="#4cc97f" stroke-width="1.2"/><path d="M6.5 3.3 L3.9 6.2 H5.6 V9.6 H7.4 V6.2 H9.1 Z" fill="#4cc97f"/></svg></div>
<div class="t" style="left:1204px;top:626.21px;font-size:12.86px;color:#111;">16/10/2025, 10:40:50</div>
<div class="t" style="left:1445.5px;top:626.21px;font-size:12.86px;color:#111;">1 minutes</div>
<svg class="ic" style="left:1650px;top:621.00px" width="95" height="20" viewBox="1650 -10 95 20"><circle cx="1663.7" cy="-0.5" r="5.7" fill="none" stroke="#f0ad4e" stroke-width="1.2"/><rect x="1661.4" y="-2.8" width="4.6" height="4.6" fill="#f0ad4e"/><path d="M1679.3 -5.9 H1685 L1687.7 -3.2 V5.4 H1679.3 Z" fill="none" stroke="#17b9b0" stroke-width="1.2"/><path d="M1684.6 -6 V-3 H1687.8" fill="none" stroke="#17b9b0" stroke-width="1"/><path d="M1681 0.3 H1686 M1681 2.4 H1686" stroke="#17b39a" stroke-width="0.9"/><path d="M1706.2 -4.6 H1699.8 V5.4 H1709.8 V0.8" fill="none" stroke="#2d9be3" stroke-width="1.4"/><path d="M1703.6 2.9 L1712.2 -5.7" stroke="#2d9be3" stroke-width="2.4"/><path d="M1703 3.6 L1703.4 1.6 L1705 3.2 Z" fill="#2d9be3"/><rect x="1723.8" y="-5.6" width="11.1" height="1.5" fill="#d0101a"/><rect x="1727.4" y="-6.6" width="3.9" height="1.2" fill="#d0101a"/><path d="M1724.9 -3.4 H1734.1 L1733.8 5.6 H1725.2 Z" fill="#d0101a"/><rect x="1727" y="-1.9" width="0.9" height="5.8" fill="#fff"/><rect x="1729.05" y="-1.9" width="0.9" height="5.8" fill="#fff"/><rect x="1731.1" y="-1.9" width="0.9" height="5.8" fill="#fff"/></svg>
<div class="abs" style="left:117px;top:650px;width:1702px;height:1px;background:#e9e9e9"></div>
<div class="cb" style="left:125px;top:661px"></div>
<div class="t" style="left:159.5px;top:663.71px;font-size:12.86px;color:#2f8ee8;">cname_monitor</div>
<div class="t" style="left:366.5px;top:663.71px;font-size:12.86px;color:#111;">TCP</div>
<div class="t" style="left:453.5px;top:663.71px;font-size:12.86px;color:#111;">10655-w22-1.csez.zohocorpin.com.</div>
<div class="t" style="left:838px;top:663.71px;font-size:12.86px;color:#111;">CNAME</div>
<div class="t" style="left:964px;top:663.71px;font-size:12.86px;color:#111;">9443</div>
<div class="t" style="left:1055px;top:663.71px;font-size:12.86px;color:#4cc97f;font-weight:bold;">Up</div>
<div class="abs" style="left:1081.7px;top:661.60px;width:13px;height:13px"><svg width="13" height="13" viewBox="0 0 13 13"><circle cx="6.5" cy="6.5" r="5.6" fill="none" stroke="#4cc97f" stroke-width="1.2"/><path d="M6.5 3.3 L3.9 6.2 H5.6 V9.6 H7.4 V6.2 H9.1 Z" fill="#4cc97f"/></svg></div>
<div class="t" style="left:1204px;top:663.71px;font-size:12.86px;color:#111;">16/10/2025, 10:41:50</div>
<div class="t" style="left:1445.5px;top:663.71px;font-size:12.86px;color:#111;">3 minutes</div>
<svg class="ic" style="left:1650px;top:658.50px" width="95" height="20" viewBox="1650 -10 95 20"><circle cx="1663.7" cy="-0.5" r="5.7" fill="none" stroke="#f0ad4e" stroke-width="1.2"/><rect x="1661.4" y="-2.8" width="4.6" height="4.6" fill="#f0ad4e"/><path d="M1679.3 -5.9 H1685 L1687.7 -3.2 V5.4 H1679.3 Z" fill="none" stroke="#17b9b0" stroke-width="1.2"/><path d="M1684.6 -6 V-3 H1687.8" fill="none" stroke="#17b9b0" stroke-width="1"/><path d="M1681 0.3 H1686 M1681 2.4 H1686" stroke="#17b39a" stroke-width="0.9"/><path d="M1706.2 -4.6 H1699.8 V5.4 H1709.8 V0.8" fill="none" stroke="#2d9be3" stroke-width="1.4"/><path d="M1703.6 2.9 L1712.2 -5.7" stroke="#2d9be3" stroke-width="2.4"/><path d="M1703 3.6 L1703.4 1.6 L1705 3.2 Z" fill="#2d9be3"/><rect x="1723.8" y="-5.6" width="11.1" height="1.5" fill="#d0101a"/><rect x="1727.4" y="-6.6" width="3.9" height="1.2" fill="#d0101a"/><path d="M1724.9 -3.4 H1734.1 L1733.8 5.6 H1725.2 Z" fill="#d0101a"/><rect x="1727" y="-1.9" width="0.9" height="5.8" fill="#fff"/><rect x="1729.05" y="-1.9" width="0.9" height="5.8" fill="#fff"/><rect x="1731.1" y="-1.9" width="0.9" height="5.8" fill="#fff"/></svg>
<div class="abs" style="left:117px;top:688px;width:1702px;height:1px;background:#e9e9e9"></div>
<div class="cb" style="left:125px;top:698px"></div>
<div class="t" style="left:159.5px;top:701.21px;font-size:12.86px;color:#2f8ee8;">ddi137</div>
<div class="t" style="left:366.5px;top:701.21px;font-size:12.86px;color:#111;">TCP</div>
<div class="t" style="left:453.5px;top:701.21px;font-size:12.86px;color:#111;">10.71.17.137</div>
<div class="t" style="left:838px;top:701.21px;font-size:12.86px;color:#111;">A</div>
<div class="t" style="left:964px;top:701.21px;font-size:12.86px;color:#111;">9443</div>
<div class="t" style="left:1055px;top:701.21px;font-size:12.86px;color:#4cc97f;font-weight:bold;">Up</div>
<div class="abs" style="left:1081.7px;top:699.10px;width:13px;height:13px"><svg width="13" height="13" viewBox="0 0 13 13"><circle cx="6.5" cy="6.5" r="5.6" fill="none" stroke="#4cc97f" stroke-width="1.2"/><path d="M6.5 3.3 L3.9 6.2 H5.6 V9.6 H7.4 V6.2 H9.1 Z" fill="#4cc97f"/></svg></div>
<div class="t" style="left:1204px;top:701.21px;font-size:12.86px;color:#111;">16/10/2025, 10:40:50</div>
<div class="t" style="left:1445.5px;top:701.21px;font-size:12.86px;color:#111;">1 minutes</div>
<svg class="ic" style="left:1650px;top:696.00px" width="95" height="20" viewBox="1650 -10 95 20"><circle cx="1663.7" cy="-0.5" r="5.7" fill="none" stroke="#f0ad4e" stroke-width="1.2"/><rect x="1661.4" y="-2.8" width="4.6" height="4.6" fill="#f0ad4e"/><path d="M1679.3 -5.9 H1685 L1687.7 -3.2 V5.4 H1679.3 Z" fill="none" stroke="#17b9b0" stroke-width="1.2"/><path d="M1684.6 -6 V-3 H1687.8" fill="none" stroke="#17b9b0" stroke-width="1"/><path d="M1681 0.3 H1686 M1681 2.4 H1686" stroke="#17b39a" stroke-width="0.9"/><path d="M1706.2 -4.6 H1699.8 V5.4 H1709.8 V0.8" fill="none" stroke="#2d9be3" stroke-width="1.4"/><path d="M1703.6 2.9 L1712.2 -5.7" stroke="#2d9be3" stroke-width="2.4"/><path d="M1703 3.6 L1703.4 1.6 L1705 3.2 Z" fill="#2d9be3"/><rect x="1723.8" y="-5.6" width="11.1" height="1.5" fill="#d0101a"/><rect x="1727.4" y="-6.6" width="3.9" height="1.2" fill="#d0101a"/><path d="M1724.9 -3.4 H1734.1 L1733.8 5.6 H1725.2 Z" fill="#d0101a"/><rect x="1727" y="-1.9" width="0.9" height="5.8" fill="#fff"/><rect x="1729.05" y="-1.9" width="0.9" height="5.8" fill="#fff"/><rect x="1731.1" y="-1.9" width="0.9" height="5.8" fill="#fff"/></svg>
<div class="abs" style="left:117px;top:725px;width:1702px;height:1px;background:#e9e9e9"></div>
<div class="cb" style="left:125px;top:736px"></div>
<div class="t" style="left:159.5px;top:738.21px;font-size:12.86px;color:#2f8ee8;">ddi137_2</div>
<div class="t" style="left:366.5px;top:738.21px;font-size:12.86px;color:#111;">PING</div>
<div class="t" style="left:453.5px;top:738.21px;font-size:12.86px;color:#111;">10.71.17.137</div>
<div class="t" style="left:838px;top:738.21px;font-size:12.86px;color:#111;">A</div>
<div class="t" style="left:964px;top:738.21px;font-size:12.86px;color:#111;">443</div>
<div class="t" style="left:1055px;top:738.21px;font-size:12.86px;color:#4cc97f;font-weight:bold;">Up</div>
<div class="abs" style="left:1081.7px;top:736.10px;width:13px;height:13px"><svg width="13" height="13" viewBox="0 0 13 13"><circle cx="6.5" cy="6.5" r="5.6" fill="none" stroke="#4cc97f" stroke-width="1.2"/><path d="M6.5 3.3 L3.9 6.2 H5.6 V9.6 H7.4 V6.2 H9.1 Z" fill="#4cc97f"/></svg></div>
<div class="t" style="left:1204px;top:738.21px;font-size:12.86px;color:#111;">16/10/2025, 10:40:50</div>
<div class="t" style="left:1445.5px;top:738.21px;font-size:12.86px;color:#111;">1 minutes</div>
<svg class="ic" style="left:1650px;top:733.00px" width="95" height="20" viewBox="1650 -10 95 20"><circle cx="1663.7" cy="-0.5" r="5.7" fill="none" stroke="#f0ad4e" stroke-width="1.2"/><rect x="1661.4" y="-2.8" width="4.6" height="4.6" fill="#f0ad4e"/><path d="M1679.3 -5.9 H1685 L1687.7 -3.2 V5.4 H1679.3 Z" fill="none" stroke="#17b9b0" stroke-width="1.2"/><path d="M1684.6 -6 V-3 H1687.8" fill="none" stroke="#17b9b0" stroke-width="1"/><path d="M1681 0.3 H1686 M1681 2.4 H1686" stroke="#17b39a" stroke-width="0.9"/><path d="M1706.2 -4.6 H1699.8 V5.4 H1709.8 V0.8" fill="none" stroke="#2d9be3" stroke-width="1.4"/><path d="M1703.6 2.9 L1712.2 -5.7" stroke="#2d9be3" stroke-width="2.4"/><path d="M1703 3.6 L1703.4 1.6 L1705 3.2 Z" fill="#2d9be3"/><rect x="1723.8" y="-5.6" width="11.1" height="1.5" fill="#d0101a"/><rect x="1727.4" y="-6.6" width="3.9" height="1.2" fill="#d0101a"/><path d="M1724.9 -3.4 H1734.1 L1733.8 5.6 H1725.2 Z" fill="#d0101a"/><rect x="1727" y="-1.9" width="0.9" height="5.8" fill="#fff"/><rect x="1729.05" y="-1.9" width="0.9" height="5.8" fill="#fff"/><rect x="1731.1" y="-1.9" width="0.9" height="5.8" fill="#fff"/></svg>
<div class="abs" style="left:117px;top:762px;width:1702px;height:1px;background:#e9e9e9"></div>
<div class="cb" style="left:125px;top:772px"></div>
<div class="t" style="left:159.5px;top:775.21px;font-size:12.86px;color:#2f8ee8;">muhesh_machine</div>
<div class="t" style="left:366.5px;top:775.21px;font-size:12.86px;color:#111;">PING</div>
<div class="t" style="left:453.5px;top:775.21px;font-size:12.86px;color:#111;">10.71.17.197</div>
<div class="t" style="left:838px;top:775.21px;font-size:12.86px;color:#111;">A</div>
<div class="t" style="left:964px;top:775.21px;font-size:12.86px;color:#111;">9443</div>
<div class="t" style="left:1055px;top:775.21px;font-size:12.86px;color:#4cc97f;font-weight:bold;">Up</div>
<div class="abs" style="left:1081.7px;top:773.10px;width:13px;height:13px"><svg width="13" height="13" viewBox="0 0 13 13"><circle cx="6.5" cy="6.5" r="5.6" fill="none" stroke="#4cc97f" stroke-width="1.2"/><path d="M6.5 3.3 L3.9 6.2 H5.6 V9.6 H7.4 V6.2 H9.1 Z" fill="#4cc97f"/></svg></div>
<div class="t" style="left:1204px;top:775.21px;font-size:12.86px;color:#111;">16/10/2025, 10:41:50</div>
<div class="t" style="left:1445.5px;top:775.21px;font-size:12.86px;color:#111;">3 minutes</div>
<svg class="ic" style="left:1650px;top:770.00px" width="95" height="20" viewBox="1650 -10 95 20"><circle cx="1663.7" cy="-0.5" r="5.7" fill="none" stroke="#f0ad4e" stroke-width="1.2"/><rect x="1661.4" y="-2.8" width="4.6" height="4.6" fill="#f0ad4e"/><path d="M1679.3 -5.9 H1685 L1687.7 -3.2 V5.4 H1679.3 Z" fill="none" stroke="#17b9b0" stroke-width="1.2"/><path d="M1684.6 -6 V-3 H1687.8" fill="none" stroke="#17b9b0" stroke-width="1"/><path d="M1681 0.3 H1686 M1681 2.4 H1686" stroke="#17b39a" stroke-width="0.9"/><path d="M1706.2 -4.6 H1699.8 V5.4 H1709.8 V0.8" fill="none" stroke="#2d9be3" stroke-width="1.4"/><path d="M1703.6 2.9 L1712.2 -5.7" stroke="#2d9be3" stroke-width="2.4"/><path d="M1703 3.6 L1703.4 1.6 L1705 3.2 Z" fill="#2d9be3"/><rect x="1723.8" y="-5.6" width="11.1" height="1.5" fill="#d0101a"/><rect x="1727.4" y="-6.6" width="3.9" height="1.2" fill="#d0101a"/><path d="M1724.9 -3.4 H1734.1 L1733.8 5.6 H1725.2 Z" fill="#d0101a"/><rect x="1727" y="-1.9" width="0.9" height="5.8" fill="#fff"/><rect x="1729.05" y="-1.9" width="0.9" height="5.8" fill="#fff"/><rect x="1731.1" y="-1.9" width="0.9" height="5.8" fill="#fff"/></svg>
<div class="abs" style="left:117px;top:799px;width:1702px;height:1px;background:#e9e9e9"></div>
<div class="cb" style="left:125px;top:810px"></div>
<div class="t" style="left:159.5px;top:812.71px;font-size:12.86px;color:#2f8ee8;">win1_1</div>
<div class="t" style="left:366.5px;top:812.71px;font-size:12.86px;color:#111;">PING</div>
<div class="t" style="left:453.5px;top:812.71px;font-size:12.86px;color:#111;">10.63.15.18</div>
<div class="t" style="left:838px;top:812.71px;font-size:12.86px;color:#111;">A</div>
<div class="t" style="left:964px;top:812.71px;font-size:12.86px;color:#111;">443</div>
<div class="t" style="left:1055px;top:812.71px;font-size:12.86px;color:#4cc97f;font-weight:bold;">Up</div>
<div class="abs" style="left:1081.7px;top:810.60px;width:13px;height:13px"><svg width="13" height="13" viewBox="0 0 13 13"><circle cx="6.5" cy="6.5" r="5.6" fill="none" stroke="#4cc97f" stroke-width="1.2"/><path d="M6.5 3.3 L3.9 6.2 H5.6 V9.6 H7.4 V6.2 H9.1 Z" fill="#4cc97f"/></svg></div>
<div class="t" style="left:1204px;top:812.71px;font-size:12.86px;color:#111;">16/10/2025, 10:41:50</div>
<div class="t" style="left:1445.5px;top:812.71px;font-size:12.86px;color:#111;">3 minutes</div>
<svg class="ic" style="left:1650px;top:807.50px" width="95" height="20" viewBox="1650 -10 95 20"><circle cx="1663.7" cy="-0.5" r="5.7" fill="none" stroke="#f0ad4e" stroke-width="1.2"/><rect x="1661.4" y="-2.8" width="4.6" height="4.6" fill="#f0ad4e"/><path d="M1679.3 -5.9 H1685 L1687.7 -3.2 V5.4 H1679.3 Z" fill="none" stroke="#17b9b0" stroke-width="1.2"/><path d="M1684.6 -6 V-3 H1687.8" fill="none" stroke="#17b9b0" stroke-width="1"/><path d="M1681 0.3 H1686 M1681 2.4 H1686" stroke="#17b39a" stroke-width="0.9"/><path d="M1706.2 -4.6 H1699.8 V5.4 H1709.8 V0.8" fill="none" stroke="#2d9be3" stroke-width="1.4"/><path d="M1703.6 2.9 L1712.2 -5.7" stroke="#2d9be3" stroke-width="2.4"/><path d="M1703 3.6 L1703.4 1.6 L1705 3.2 Z" fill="#2d9be3"/><rect x="1723.8" y="-5.6" width="11.1" height="1.5" fill="#d0101a"/><rect x="1727.4" y="-6.6" width="3.9" height="1.2" fill="#d0101a"/><path d="M1724.9 -3.4 H1734.1 L1733.8 5.6 H1725.2 Z" fill="#d0101a"/><rect x="1727" y="-1.9" width="0.9" height="5.8" fill="#fff"/><rect x="1729.05" y="-1.9" width="0.9" height="5.8" fill="#fff"/><rect x="1731.1" y="-1.9" width="0.9" height="5.8" fill="#fff"/></svg>
<div class="abs" style="left:117px;top:837px;width:1702px;height:1px;background:#e9e9e9"></div>
<div class="cb" style="left:125px;top:848px"></div>
<div class="t" style="left:159.5px;top:850.21px;font-size:12.86px;color:#2f8ee8;">win_2</div>
<div class="t" style="left:366.5px;top:850.21px;font-size:12.86px;color:#111;">PING</div>
<div class="t" style="left:453.5px;top:850.21px;font-size:12.86px;color:#111;">10.63.6.119</div>
<div class="t" style="left:838px;top:850.21px;font-size:12.86px;color:#111;">A</div>
<div class="t" style="left:964px;top:850.21px;font-size:12.86px;color:#111;">443</div>
<div class="t" style="left:1055px;top:850.21px;font-size:12.86px;color:#4cc97f;font-weight:bold;">Up</div>
<div class="abs" style="left:1081.7px;top:848.10px;width:13px;height:13px"><svg width="13" height="13" viewBox="0 0 13 13"><circle cx="6.5" cy="6.5" r="5.6" fill="none" stroke="#4cc97f" stroke-width="1.2"/><path d="M6.5 3.3 L3.9 6.2 H5.6 V9.6 H7.4 V6.2 H9.1 Z" fill="#4cc97f"/></svg></div>
<div class="t" style="left:1204px;top:850.21px;font-size:12.86px;color:#111;">16/10/2025, 10:40:50</div>
<div class="t" style="left:1445.5px;top:850.21px;font-size:12.86px;color:#111;">1 minutes</div>
<svg class="ic" style="left:1650px;top:845.00px" width="95" height="20" viewBox="1650 -10 95 20"><circle cx="1663.7" cy="-0.5" r="5.7" fill="none" stroke="#f0ad4e" stroke-width="1.2"/><rect x="1661.4" y="-2.8" width="4.6" height="4.6" fill="#f0ad4e"/><path d="M1679.3 -5.9 H1685 L1687.7 -3.2 V5.4 H1679.3 Z" fill="none" stroke="#17b9b0" stroke-width="1.2"/><path d="M1684.6 -6 V-3 H1687.8" fill="none" stroke="#17b9b0" stroke-width="1"/><path d="M1681 0.3 H1686 M1681 2.4 H1686" stroke="#17b39a" stroke-width="0.9"/><path d="M1706.2 -4.6 H1699.8 V5.4 H1709.8 V0.8" fill="none" stroke="#2d9be3" stroke-width="1.4"/><path d="M1703.6 2.9 L1712.2 -5.7" stroke="#2d9be3" stroke-width="2.4"/><path d="M1703 3.6 L1703.4 1.6 L1705 3.2 Z" fill="#2d9be3"/><rect x="1723.8" y="-5.6" width="11.1" height="1.5" fill="#d0101a"/><rect x="1727.4" y="-6.6" width="3.9" height="1.2" fill="#d0101a"/><path d="M1724.9 -3.4 H1734.1 L1733.8 5.6 H1725.2 Z" fill="#d0101a"/><rect x="1727" y="-1.9" width="0.9" height="5.8" fill="#fff"/><rect x="1729.05" y="-1.9" width="0.9" height="5.8" fill="#fff"/><rect x="1731.1" y="-1.9" width="0.9" height="5.8" fill="#fff"/></svg>
<div class="abs" style="left:117px;top:874px;width:1702px;height:1px;background:#e9e9e9"></div>
<div class="cb" style="left:125px;top:884px"></div>
<div class="t" style="left:159.5px;top:887.21px;font-size:12.86px;color:#2f8ee8;">win2_4</div>
<div class="t" style="left:366.5px;top:887.21px;font-size:12.86px;color:#111;">TCP</div>
<div class="t" style="left:453.5px;top:887.21px;font-size:12.86px;color:#111;">10.63.6.119</div>
<div class="t" style="left:838px;top:887.21px;font-size:12.86px;color:#111;">A</div>
<div class="t" style="left:964px;top:887.21px;font-size:12.86px;color:#111;">53</div>
<div class="t" style="left:1055px;top:887.21px;font-size:12.86px;color:#4cc97f;font-weight:bold;">Up</div>
<div class="abs" style="left:1081.7px;top:885.10px;width:13px;height:13px"><svg width="13" height="13" viewBox="0 0 13 13"><circle cx="6.5" cy="6.5" r="5.6" fill="none" stroke="#4cc97f" stroke-width="1.2"/><path d="M6.5 3.3 L3.9 6.2 H5.6 V9.6 H7.4 V6.2 H9.1 Z" fill="#4cc97f"/></svg></div>
<div class="t" style="left:1204px;top:887.21px;font-size:12.86px;color:#111;">16/10/2025, 10:40:50</div>
<div class="t" style="left:1445.5px;top:887.21px;font-size:12.86px;color:#111;">1 minutes</div>
<svg class="ic" style="left:1650px;top:882.00px" width="95" height="20" viewBox="1650 -10 95 20"><circle cx="1663.7" cy="-0.5" r="5.7" fill="none" stroke="#f0ad4e" stroke-width="1.2"/><rect x="1661.4" y="-2.8" width="4.6" height="4.6" fill="#f0ad4e"/><path d="M1679.3 -5.9 H1685 L1687.7 -3.2 V5.4 H1679.3 Z" fill="none" stroke="#17b9b0" stroke-width="1.2"/><path d="M1684.6 -6 V-3 H1687.8" fill="none" stroke="#17b9b0" stroke-width="1"/><path d="M1681 0.3 H1686 M1681 2.4 H1686" stroke="#17b39a" stroke-width="0.9"/><path d="M1706.2 -4.6 H1699.8 V5.4 H1709.8 V0.8" fill="none" stroke="#2d9be3" stroke-width="1.4"/><path d="M1703.6 2.9 L1712.2 -5.7" stroke="#2d9be3" stroke-width="2.4"/><path d="M1703 3.6 L1703.4 1.6 L1705 3.2 Z" fill="#2d9be3"/><rect x="1723.8" y="-5.6" width="11.1" height="1.5" fill="#d0101a"/><rect x="1727.4" y="-6.6" width="3.9" height="1.2" fill="#d0101a"/><path d="M1724.9 -3.4 H1734.1 L1733.8 5.6 H1725.2 Z" fill="#d0101a"/><rect x="1727" y="-1.9" width="0.9" height="5.8" fill="#fff"/><rect x="1729.05" y="-1.9" width="0.9" height="5.8" fill="#fff"/><rect x="1731.1" y="-1.9" width="0.9" height="5.8" fill="#fff"/></svg>
<div id="vscroll" class="abs"></div>
<div class="abs" style="left:1836px;top:115px;width:6px;height:784px;background:#d8d8d8;border-radius:2px"></div>
<svg class="ic" style="left:1835px;top:105px" width="8" height="6" viewBox="0 0 8 6"><path d="M0.5 5 L4 1 L7.5 5 Z" fill="#d0cece"/></svg>
<svg class="ic" style="left:1835px;top:918px" width="8" height="6" viewBox="0 0 8 6"><path d="M0.5 1 L4 5 L7.5 1 Z" fill="#d0cece"/></svg>
<div id="hscroll" class="abs"></div>
<div class="abs" style="left:123px;top:928px;width:1685px;height:6px;background:#d9d9d9;border-radius:2px"></div>
<svg class="ic" style="left:113px;top:927px" width="6" height="8" viewBox="0 0 6 8"><path d="M5 0.5 L1 4 L5 7.5 Z" fill="#d4d2d2"/></svg>
<svg class="ic" style="left:1826px;top:927px" width="6" height="8" viewBox="0 0 6 8"><path d="M1 0.5 L5 4 L1 7.5 Z" fill="#d4d2d2"/></svg>
</body></html>
